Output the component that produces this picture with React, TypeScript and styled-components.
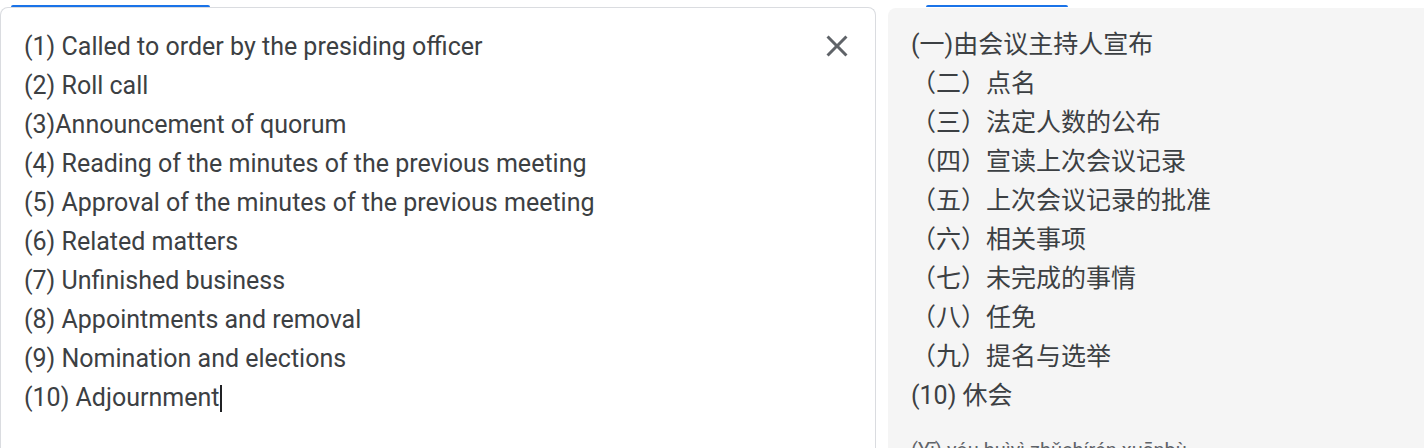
import styled, { createGlobalStyle } from "styled-components";

const GlobalStyle = createGlobalStyle`
	html, body {
		margin: 0;
		padding: 0;
		background: #ffffff;
		overflow: hidden;
	}
`;

const sourceLines = [
	"(1) Called to order by the presiding officer",
	"(2) Roll call",
	"(3)Announcement of quorum",
	"(4) Reading of the minutes of the previous meeting",
	"(5) Approval of the minutes of the previous meeting",
	"(6) Related matters",
	"(7) Unfinished business",
	"(8) Appointments and removal",
	"(9) Nomination and elections",
	"(10) Adjournment",
];

const targetLines = [
	"(一)由会议主持人宣布",
	"（二）点名",
	"（三）法定人数的公布",
	"（四）宣读上次会议记录",
	"（五）上次会议记录的批准",
	"（六）相关事项",
	"（七）未完成的事情",
	"（八）任免",
	"（九）提名与选举",
	"(10) 休会",
];

const Page = styled.div`
	width: 1424px;
	height: 448px;
	overflow: hidden;
	display: flex;
	flex-direction: column;
`;

const TabRow = styled.div`
	flex-shrink: 0;
	display: grid;
	grid-template-columns: 876px 1fr;
	column-gap: 12px;
	height: 7px;
	align-items: end;
`;

const TabIndicator = styled.div<{ $offset: number; $width: number }>`
	margin-left: ${(p) => p.$offset}px;
	width: ${(p) => p.$width}px;
	height: 2px;
	background: #1a73e8;
	border-radius: 2px 2px 0 0;
`;

const Panels = styled.div`
	flex-shrink: 0;
	display: grid;
	grid-template-columns: 876px 1fr;
	column-gap: 12px;
	align-items: start;
`;

const SourcePanel = styled.div`
	box-sizing: border-box;
	height: 460px;
	border: 1px solid #dadce0;
	border-bottom: none;
	border-radius: 8px 8px 0 0;
	display: flex;
	align-items: flex-start;
	justify-content: space-between;
`;

const TargetPanel = styled.div`
	box-sizing: border-box;
	height: 460px;
	margin-top: 1px;
	background: #f5f5f5;
	border-radius: 8px 0 0 0;
	padding: 17px 0 0 23px;
`;

const SourceText = styled.div`
	padding: 19px 0 0 23px;
	font-family: Roboto, "Liberation Sans", Arial, sans-serif;
	font-size: 25px;
	line-height: 39px;
	color: #3c4043;
	white-space: pre;
`;

const TargetText = styled.div`
	font-family: Roboto, "Noto Sans CJK SC", sans-serif;
	font-size: 25px;
	line-height: 39px;
	color: #3c4043;
	white-space: pre;
`;

const Line = styled.div``;

const Caret = styled.span`
	display: inline-block;
	width: 2px;
	height: 27px;
	margin-left: 1px;
	vertical-align: -6px;
	background: #202124;
`;

const CloseButton = styled.button`
	width: 48px;
	height: 48px;
	margin: 14px 14px 0 0;
	padding: 0;
	border: none;
	background: transparent;
	border-radius: 50%;
	display: flex;
	align-items: center;
	justify-content: center;
	color: #5f6368;
	cursor: pointer;
`;

const Romanization = styled.div`
	margin-top: 21px;
	font-family: Roboto, "Liberation Sans", Arial, sans-serif;
	font-size: 20px;
	line-height: 28px;
	color: #5f6368;
	white-space: pre;
`;

const CloseIcon = () => (
	<svg width="36" height="36" viewBox="0 0 24 24" fill="currentColor">
		<path d="M19 6.41 17.59 5 12 10.59 6.41 5 5 6.41 10.59 12 5 17.59 6.41 19 12 13.41 17.59 19 19 17.59 13.41 12z" />
	</svg>
);

const App = () => {
	return (
		<Page>
			<GlobalStyle />
			<TabRow>
				<TabIndicator $offset={11} $width={199} />
				<TabIndicator $offset={38} $width={142} />
			</TabRow>
			<Panels>
				<SourcePanel>
					<SourceText>
						{sourceLines.map((line, i) => (
							<Line key={i}>
								{line}
								{i === sourceLines.length - 1 && <Caret />}
							</Line>
						))}
					</SourceText>
					<CloseButton aria-label="Clear source text">
						<CloseIcon />
					</CloseButton>
				</SourcePanel>
				<TargetPanel>
					<TargetText>
						{targetLines.map((line, i) => (
							<Line key={i}>{line}</Line>
						))}
					</TargetText>
					<Romanization>(Yī) yóu huìyì zhǔchírén xuānbù</Romanization>
				</TargetPanel>
			</Panels>
		</Page>
	);
};

export default App;
